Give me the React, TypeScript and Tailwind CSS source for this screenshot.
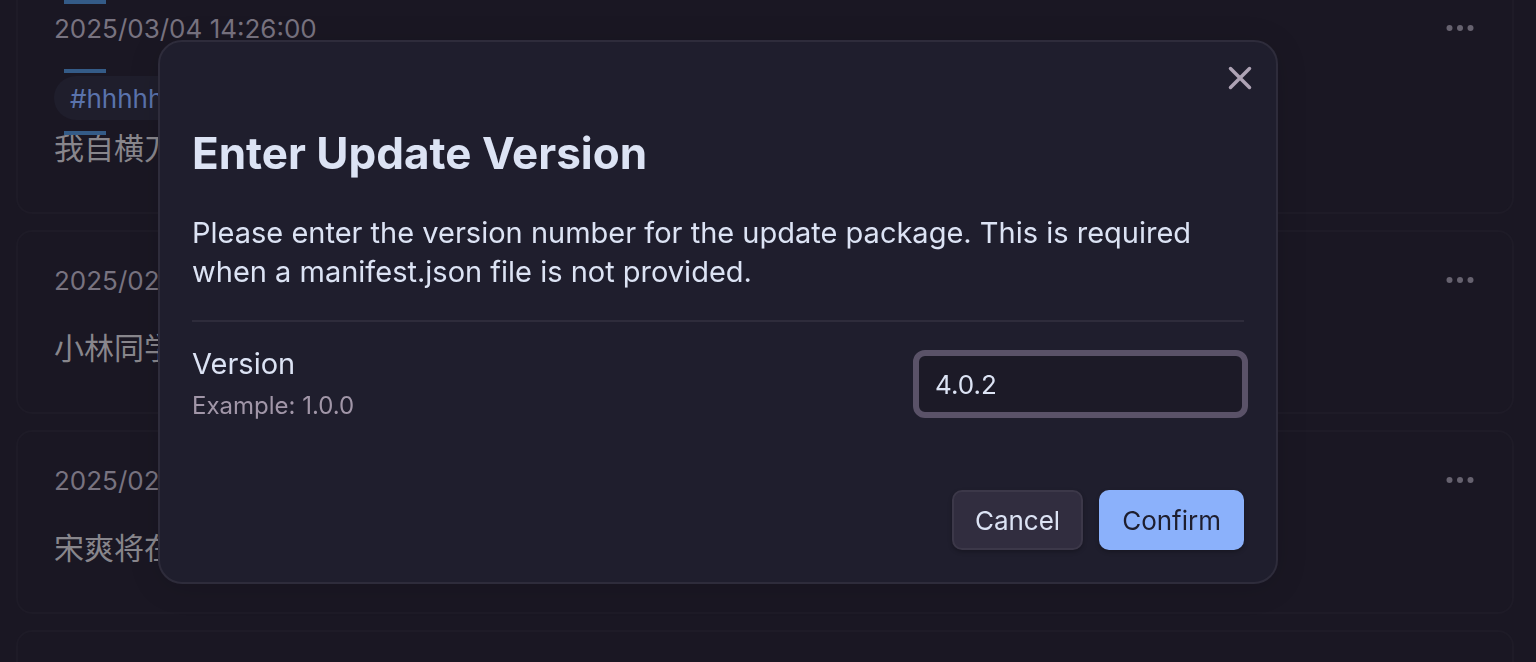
import { useState } from "react";

function MoreButton() {
  return (
    <button type="button" aria-label="More actions" className="flex h-8 w-8 items-center justify-center text-[#66626f]">
      <svg width="32" height="32" viewBox="0 0 32 32" fill="currentColor" aria-hidden="true">
        <circle cx="5.5" cy="16" r="3" />
        <circle cx="16" cy="16" r="3" />
        <circle cx="26.5" cy="16" r="3" />
      </svg>
    </button>
  );
}

function CardHeader({ date }: { date: string }) {
  return (
    <div className="flex items-start justify-between">
      <time className="text-[26px] leading-[34px] text-[#787380]">{date}</time>
      <MoreButton />
    </div>
  );
}

function Memo({ date, text }: { date: string; text: string }) {
  return (
    <article className="rounded-2xl border-2 border-[#1e1b27] px-9 pt-8 pb-[42px]">
      <CardHeader date={date} />
      <p className="mt-7 text-[30px] leading-11 text-[#88868c]">{text}</p>
    </article>
  );
}

function Marker() {
  return <span className="h-1 w-[42px] bg-[#345b87]" />;
}

export default function App() {
  const [version, setVersion] = useState("4.0.2");

  return (
    <div className="h-screen overflow-hidden bg-[#1a1723] font-['Inter','Noto_Sans_CJK_SC',sans-serif]">
      <main className="flex flex-col gap-4 pr-[22px] pl-4">
        <article className="relative rounded-b-2xl border-2 border-t-0 border-[#1e1b27] px-9 pt-3 pb-[42px]">
          <CardHeader date="2025/03/04 14:26:00" />
          <a href="#tag" className="mt-[30px] flex h-11 w-fit items-center rounded-full bg-[#1f1e2c] px-4 text-[26px] text-[#5a73ac]">
            #hhhhhh
          </a>
          <p className="mt-[6px] text-[30px] leading-11 text-[#88868c]">我自横刀</p>
          <div className="absolute top-0 left-[46px] flex flex-col">
            <Marker />
            <span className="h-[65px]" />
            <Marker />
            <span className="h-[58px]" />
            <Marker />
          </div>
        </article>
        <Memo date="2025/02/" text="小林同学" />
        <Memo date="2025/02/" text="宋爽将在" />
        <article className="h-48 rounded-2xl border-2 border-[#1e1b27]" />
      </main>

      <div className="fixed inset-0 flex items-start justify-center pt-10 pr-[100px]">
        <section
          role="dialog"
          aria-modal="true"
          aria-labelledby="dialog-title"
          className="relative w-full max-w-[1120px] rounded-3xl border-2 border-[#2e2c3b] bg-[#1f1e2d] px-8 pt-[83px] pb-8 text-[#dce3f4] shadow-[0_4px_32px_rgba(0,0,0,0.12)]"
        >
          <button type="button" aria-label="Close" className="absolute top-5 right-5 flex h-8 w-8 items-center justify-center text-[#aea3b5]">
            <svg width="32" height="32" viewBox="0 0 32 32" fill="none" stroke="currentColor" strokeWidth="3.5" strokeLinecap="round" aria-hidden="true">
              <path d="M6.5 6.5 25.5 25.5M25.5 6.5 6.5 25.5" />
            </svg>
          </button>
          <h1 id="dialog-title" className="text-[44px] leading-14 font-bold">
            Enter Update Version
          </h1>
          <p className="mt-8 text-[29px] leading-[39px]">
            Please enter the version number for the update package. This is required when a manifest.json file is not provided.
          </p>
          <div className="mt-[29px] flex items-center justify-between border-t-2 border-[#2e2c3b] pt-[22px]">
            <div className="flex flex-col gap-1">
              <label htmlFor="version" className="text-[29px] leading-10">
                Version
              </label>
              <span className="text-2xl leading-9 text-[#a196a8]">Example: 1.0.0</span>
            </div>
            <input
              id="version"
              type="text"
              value={version}
              onChange={(e) => setVersion(e.target.value)}
              className="-mr-1 h-[68px] w-[335px] rounded-xl border-6 border-[#5a5268] bg-[#1c1a27] px-4 text-[26px] text-[#dce3f4] outline-none"
            />
          </div>
          <div className="mt-[66px] flex justify-end gap-4 text-[26px]">
            <button type="button" className="h-[60px] rounded-[10px] border-2 border-[#3c3849] bg-[#312d3f] px-[21px] shadow-[0_2px_4px_rgba(0,0,0,0.25)]">
              Cancel
            </button>
            <button type="button" className="h-[60px] rounded-[10px] bg-[#8bb1fb] px-[23px] text-[#1e1e2e] shadow-[0_2px_4px_rgba(0,0,0,0.25)]">
              Confirm
            </button>
          </div>
        </section>
      </div>
    </div>
  );
}
